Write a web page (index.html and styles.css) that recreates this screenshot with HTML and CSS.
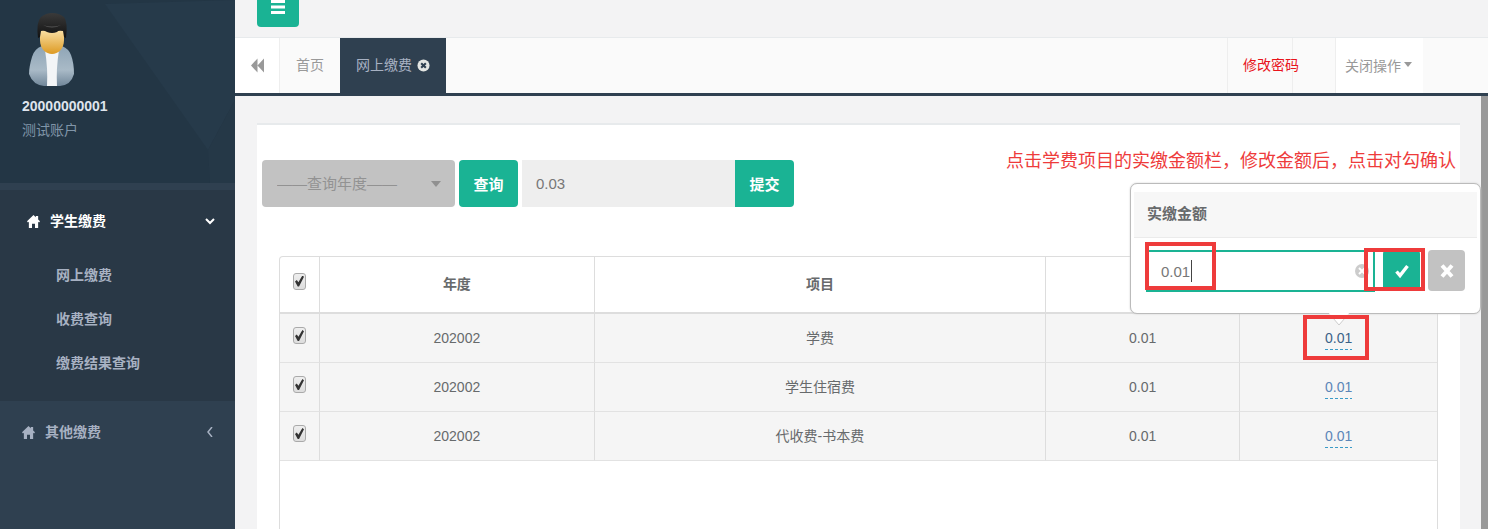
FILE: index.html
```html
<!DOCTYPE html>
<html lang="zh-CN">

<head>
    <meta charset="utf-8" />
    <title>网上缴费</title>
    <meta name="viewport" content="width=device-width, initial-scale=1.0" />
    <link rel="stylesheet" href="styles.css">
</head>

<body>
    <nav class="sidebar">
        <div class="profile">
            <svg class="profile-bg" viewBox="0 0 235 183" preserveAspectRatio="none" aria-hidden="true">
                <path d="M105 4L235 0V100L208 150z" fill="#263a4a" />
                <path d="M208 150L235 100V183H210z" fill="#253847" />
            </svg>
            <svg class="avatar" viewBox="0 0 46 74" aria-hidden="true">
                <defs>
                    <linearGradient id="suit" x1="0" y1="0" x2="0" y2="1">
                        <stop offset="0" stop-color="#8fa5b6" />
                        <stop offset=".6" stop-color="#a9bac7" />
                        <stop offset="1" stop-color="#71879a" />
                    </linearGradient>
                    <linearGradient id="face" x1="0" y1="0" x2="0" y2="1">
                        <stop offset="0" stop-color="#fbe3ab" />
                        <stop offset="1" stop-color="#dd9a22" />
                    </linearGradient>
                    <linearGradient id="hair" x1="0" y1="0" x2="0" y2="1">
                        <stop offset="0" stop-color="#3a3a3a" />
                        <stop offset="1" stop-color="#111" />
                    </linearGradient>
                </defs>
                <path d="M13 33Q5 36 3 44Q0 54 0 61Q4 72 15 73H31Q42 72 45 61Q45 50 42 42Q40 36 33 33z" fill="url(#suit)" />
                <path d="M16 37H30Q27 56 28 73H18Q19 56 16 37z" fill="#f3f5f7" />
                <path d="M11 16H35V27C35 36 29 41 23 41C17 41 11 36 11 27z" fill="url(#face)" />
                <path d="M9 25Q7 9 12 4Q17 0 23 0Q30 0 35 4Q39 9 37 25L35 24L34 18Q29 17 28 19Q23 21 18 19Q15 17 12 18L11 24z" fill="url(#hair)" />
                <path d="M14 12Q23 17 32 12Q23 15 14 12z" fill="#555" />
            </svg>
            <strong class="profile-id">20000000001</strong>
            <span class="profile-name">测试账户</span>
        </div>

        <div class="menu-group active">
            <a class="menu-head" href="#">
                <svg class="home" viewBox="0 0 14 14"><path d="M7 0L9.5 2.3V1H12V4.8L14 6.8L13 8L12 7.2V14H8.6V9.5H5.4V14H2V7.2L1 8L0 6.8z" fill="currentColor" /></svg>
                <span>学生缴费</span>
                <svg class="arrow" viewBox="0 0 10 10"><path d="M1 3L5 7L9 3" fill="none" stroke="currentColor" stroke-width="2" /></svg>
            </a>
            <ul class="submenu">
                <li><a href="#">网上缴费</a></li>
                <li><a href="#">收费查询</a></li>
                <li><a href="#">缴费结果查询</a></li>
            </ul>
        </div>
        <div class="menu-group">
            <a class="menu-head" href="#">
                <svg class="home" viewBox="0 0 14 14"><path d="M7 0L9.5 2.3V1H12V4.8L14 6.8L13 8L12 7.2V14H8.6V9.5H5.4V14H2V7.2L1 8L0 6.8z" fill="currentColor" /></svg>
                <span>其他缴费</span>
                <svg class="arrow" viewBox="0 0 10 10"><path d="M7 0L3 5L7 10" fill="none" stroke="currentColor" stroke-width="1.5" /></svg>
            </a>
        </div>
    </nav>

    <div class="main">
        <header class="topbar">
            <button class="btn menu-toggle" type="button" aria-label="菜单">
                <svg viewBox="0 0 14 17"><path d="M0 2.5H14M0 8H14M0 13.5H14" stroke="#fff" stroke-width="3" /></svg>
            </button>
        </header>

        <div class="tabs">
            <button class="tab-back" type="button" aria-label="向左">
                <svg viewBox="0 0 13 14"><path d="M6.5 0V14L0 7zM13 0V14L6.5 7z" fill="#999" /></svg>
            </button>
            <a class="tab" href="#">首页</a>
            <a class="tab current" href="#">网上缴费
                <svg viewBox="0 0 14 14"><circle cx="7" cy="7" r="6.5" fill="#e4e6e3" /><path d="M4.5 4.5L9.5 9.5M9.5 4.5L4.5 9.5" stroke="#2f4050" stroke-width="2.2" /></svg>
            </a>
            <div class="tabs-right">
                <a class="password" href="#">修改密码</a>
                <span class="spacer"></span>
                <button class="close-menu" type="button">关闭操作<i class="caret"></i></button>
            </div>
        </div>

        <div class="content">
            <div class="page">
                <div class="panel">
                    <p class="note">点击学费项目的实缴金额栏，修改金额后，点击对勾确认</p>

                    <form class="query">
                        <div class="year">
                            <select aria-label="查询年度" disabled>
                                <option>——查询年度——</option>
                            </select>
                            <i class="caret"></i>
                        </div>
                        <button class="btn" type="button">查询</button>
                        <div class="total">
                            <input type="text" aria-label="合计金额" value="0.03" readonly>
                            <button class="btn" type="button">提交</button>
                        </div>
                    </form>

                    <div class="table-box">
                        <table>
                            <colgroup>
                                <col class="col-check">
                                <col class="col-year">
                                <col class="col-item">
                                <col class="col-due">
                                <col class="col-paid">
                            </colgroup>
                            <thead>
                                <tr>
                                    <th><input type="checkbox" aria-label="全选" checked></th>
                                    <th>年度</th>
                                    <th>项目</th>
                                    <th></th>
                                    <th></th>
                                </tr>
                            </thead>
                            <tbody>
                                <tr>
                                    <td><input type="checkbox" aria-label="学费" checked></td>
                                    <td>202002</td>
                                    <td>学费</td>
                                    <td>0.01</td>
                                    <td class="editing">
                                        <a class="editable open" href="#">0.01</a>
                                        <div class="popover">
                                            <label class="popover-title" for="paid">实缴金额</label>
                                            <div class="popover-body">
                                                <div class="field">
                                                    <input id="paid" type="text" value="0.01">
                                                    <i class="cursor"></i>
                                                    <svg class="clear" viewBox="0 0 14 14"><circle cx="7" cy="7" r="7" fill="#ccc" /><path d="M4 4L10 10M10 4L4 10" stroke="#fff" stroke-width="2" /></svg>
                                                    <i class="mark mark-value"></i>
                                                </div>
                                                <div class="ok-wrap">
                                                    <button class="btn" type="button" aria-label="确认">
                                                        <svg viewBox="0 0 14 14"><path d="M1.5 7.5L5 11.5L12.5 2" fill="none" stroke="#fff" stroke-width="3.4" /></svg>
                                                    </button>
                                                    <i class="mark mark-ok"></i>
                                                </div>
                                                <button class="btn cancel" type="button" aria-label="取消">
                                                    <svg viewBox="0 0 14 14"><path d="M2 1.5L12 12.5M12 1.5L2 12.5" stroke="#fff" stroke-width="4" /></svg>
                                                </button>
                                            </div>
                                        </div>
                                        <svg class="pointer" viewBox="0 0 22 14"><path d="M0 0L11 13L22 0z" fill="#fff" /><path d="M5 6L11 13L17 6" fill="none" stroke="#ccc" /></svg>
                                        <i class="mark mark-cell"></i>
                                    </td>
                                </tr>
                                <tr>
                                    <td><input type="checkbox" aria-label="学生住宿费" checked></td>
                                    <td>202002</td>
                                    <td>学生住宿费</td>
                                    <td>0.01</td>
                                    <td><a class="editable" href="#">0.01</a></td>
                                </tr>
                                <tr>
                                    <td><input type="checkbox" aria-label="代收费-书本费" checked></td>
                                    <td>202002</td>
                                    <td>代收费-书本费</td>
                                    <td>0.01</td>
                                    <td><a class="editable" href="#">0.01</a></td>
                                </tr>
                            </tbody>
                        </table>
                    </div>
                </div>
            </div>
            <div class="scrollbar"></div>
        </div>
    </div>
</body>

</html>
```
FILE: styles.css
```css
* {
    box-sizing: border-box;
}

body {
    display: flex;
    height: 100vh;
    margin: 0;
    overflow: hidden;
    background: #f3f3f4;
    color: #676a6c;
    font-family: "Liberation Sans", "Noto Sans CJK SC", sans-serif;
    font-size: 14px;
    line-height: 24px;
}

a {
    color: inherit;
    text-decoration: none;
}

button,
input,
select {
    font-family: inherit;
    font-size: 15px;
}

svg {
    display: block;
}

.btn {
    display: flex;
    align-items: center;
    justify-content: center;
    padding: 0;
    border: 0;
    border-radius: 4px;
    background: #1ab394;
    color: #fff;
    font-weight: bold;
}

.caret {
    border: 4px solid transparent;
    border-top: 5px solid #999;
    border-bottom: 0;
}

/* sidebar */
.sidebar {
    flex: none;
    width: 235px;
    background: #2f4050;
    color: #a7b1c2;
}

.profile {
    position: relative;
    display: flex;
    flex-direction: column;
    height: 183px;
    margin-bottom: 7px;
    padding: 13px 22px 0;
    background: #233645;
}

.profile-bg {
    position: absolute;
    top: 0;
    left: 0;
    width: 100%;
    height: 100%;
}

.avatar {
    position: relative;
    width: 46px;
    height: 74px;
    margin: 0 7px 7px;
}

.profile-id {
    position: relative;
    color: #dfe4ed;
}

.profile-name {
    position: relative;
    color: #8095a8;
}

.menu-group {
    font-weight: bold;
}

.menu-group.active {
    height: 211px;
    padding-left: 5px;
    background: #293846;
}

.menu-head {
    display: flex;
    align-items: center;
    height: 62px;
    padding: 0 20px 0 22px;
}

.active .menu-head {
    color: #fff;
}

.home {
    width: 13px;
    height: 15px;
    margin-right: 10px;
}

.arrow {
    width: 10px;
    height: 10px;
    margin-left: auto;
}

.submenu {
    margin: 0;
    padding: 1px 0 0 51px;
    list-style: none;
    line-height: 44px;
}

/* top */
.main {
    display: flex;
    flex: 1;
    flex-direction: column;
    min-width: 0;
}

.topbar {
    flex: none;
    height: 37px;
    padding-left: 22px;
    overflow: hidden;
}

.menu-toggle {
    width: 42px;
    height: 47px;
    margin-top: -20px;
}

.menu-toggle svg {
    width: 14px;
    height: 17px;
    margin-top: 8px;
}

.tabs {
    display: flex;
    flex: none;
    height: 59px;
    border-top: 1px solid #e7eaec;
    border-bottom: 3px solid #2f4050;
    background: #fafafa;
    color: #999;
    line-height: 55px;
}

.tab-back {
    display: flex;
    align-items: center;
    justify-content: center;
    width: 44px;
    border: 0;
    background: #fff;
}

.tab-back svg {
    width: 13px;
    height: 15px;
}

.tab {
    display: flex;
    align-items: center;
    gap: 5px;
    padding: 0 16px;
    border-left: 1px solid #eee;
}

.tab.current {
    border-left: 0;
    background: #2f4050;
    color: #a7b1c2;
}

.tab svg {
    width: 13px;
    height: 15px;
}

.tabs-right {
    display: flex;
    margin-left: auto;
    margin-right: 65px;
}

.password {
    position: relative;
    width: 65px;
    padding-left: 15px;
    border-left: 1px solid #eee;
    color: #e8141c;
    white-space: nowrap;
}

.spacer {
    width: 43px;
    border-left: 1px solid #eee;
}

.close-menu {
    display: flex;
    align-items: center;
    gap: 3px;
    width: 88px;
    padding: 0 9px 2px;
    border: 0;
    border-left: 1px solid #eee;
    background: #fff;
    color: #999;
    font-size: 14px;
    white-space: nowrap;
}

/* content */
.content {
    display: flex;
    flex: 1;
    min-height: 0;
}

.page {
    flex: 1;
    display: flex;
    padding: 27px 21px 0 22px;
}

.scrollbar {
    width: 7px;
    background: #999;
}

.panel {
    position: relative;
    display: flex;
    flex: 1;
    flex-direction: column;
    padding: 35px 22px 0;
    border-top: 2px solid #e7eaec;
    background: #fff;
}

.note {
    position: absolute;
    top: 24px;
    right: 4px;
    margin: 0;
    color: #ee3b3b;
    font-size: 18px;
}

.query {
    display: flex;
    gap: 4px;
    height: 47px;
    margin: 0 0 49px -17px;
}

.query .btn {
    width: 59px;
}

.year {
    position: relative;
    width: 193px;
}

.year select {
    width: 100%;
    height: 100%;
    padding: 0 15px;
    border: 0;
    border-radius: 4px;
    background: #c2c2c2;
    color: #929292;
    opacity: 1;
    appearance: none;
}

.year .caret {
    position: absolute;
    top: 21px;
    right: 14px;
    border-width: 6px 5px 0;
    border-top-color: #909090;
}

.total {
    display: flex;
}

.total input {
    width: 213px;
    padding: 0 14px;
    border: 0;
    background: #eee;
    color: #777;
}

.total .btn {
    border-radius: 0 4px 4px 0;
}

/* table */
.table-box {
    flex: 1;
    border: 1px solid #ddd;
    border-bottom: 0;
    border-radius: 4px 4px 0 0;
}

table {
    width: 100%;
    border-collapse: separate;
    border-spacing: 0;
    table-layout: fixed;
}

.col-check {
    width: 40px;
}

.col-year {
    width: 24.6%;
}

.col-item {
    width: 40.4%;
}

.col-due {
    width: 17.4%;
}

.col-paid {
    width: 17.6%;
}

th,
td {
    height: 49px;
    padding: 0;
    border-right: 1px solid #ddd;
    border-bottom: 1px solid #e2e2e2;
    text-align: center;
}

th:last-child,
td:last-child {
    border-right: 0;
}

th {
    height: 57px;
    padding-bottom: 2px;
    border-bottom: 2px solid #ddd;
}

td {
    background: #f5f5f5;
}

table input[type="checkbox"] {
    position: relative;
    display: block;
    width: 13px;
    height: 17px;
    margin: -5px auto 0;
    border: 1px solid #aaa;
    border-radius: 3px;
    background: linear-gradient(#eee, #ddd);
    appearance: none;
}

table input[type="checkbox"]::before {
    content: "";
    position: absolute;
    inset: 2px 1px;
    background: #333;
    clip-path: polygon(0 55%, 20% 42%, 38% 62%, 82% 0, 100% 12%, 45% 100%, 30% 100%);
}

.editable {
    display: inline-block;
    padding-bottom: 2px;
    background: repeating-linear-gradient(90deg, #3a9bc8 0 3px, transparent 3px 5px) bottom / 100% 1px no-repeat;
    color: #5b86b8;
    line-height: 20px;
}

.editable.open {
    color: #3b6288;
}

.editing {
    position: relative;
}

/* popover */
.popover {
    position: absolute;
    right: -44px;
    bottom: 100%;
    z-index: 1;
    width: 351px;
    height: 131px;
    padding-top: 8px;
    border: 1px solid #bbb;
    border-radius: 7px;
    background: #fff;
    box-shadow: 0 0 2px #ccc;
    text-align: left;
}

.popover-title {
    display: block;
    height: 46px;
    margin: 0 3px;
    padding: 0 13px;
    border-bottom: 1px solid #ebebeb;
    background: #f7f7f7;
    font-size: 15px;
    font-weight: bold;
    line-height: 44px;
}

.popover-body {
    display: flex;
    gap: 8px;
    padding: 12px 15px;
}

.popover-body .btn {
    width: 37px;
    height: 41px;
}

.popover-body .btn svg {
    width: 14px;
    height: 16px;
}

.popover-body .cancel {
    background: #c2c2c2;
}

.field {
    position: relative;
    flex: 1;
}

.field input {
    width: 100%;
    height: 42px;
    padding: 0 13px;
    border: 2px solid #1ab394;
    color: #777;
}

.cursor {
    position: absolute;
    top: 10px;
    left: 45px;
    width: 1px;
    height: 22px;
    background: #444;
}

.clear {
    position: absolute;
    top: 13px;
    right: 6px;
    width: 14px;
    height: 16px;
}

.ok-wrap {
    position: relative;
}

.pointer {
    position: absolute;
    top: -2px;
    left: calc(50% - 11px);
    z-index: 2;
    width: 22px;
    height: 14px;
}

/* red highlight frames */
.mark {
    position: absolute;
    z-index: 3;
    border: 4px solid #ee3b3b;
}

.mark-value {
    top: -8px;
    left: -1px;
    width: 71px;
    height: 48px;
}

.mark-ok {
    top: -2px;
    left: -19px;
    width: 61px;
    height: 43px;
}

.mark-cell {
    top: 1px;
    left: calc(50% - 36px);
    width: 66px;
    height: 45px;
}
```
